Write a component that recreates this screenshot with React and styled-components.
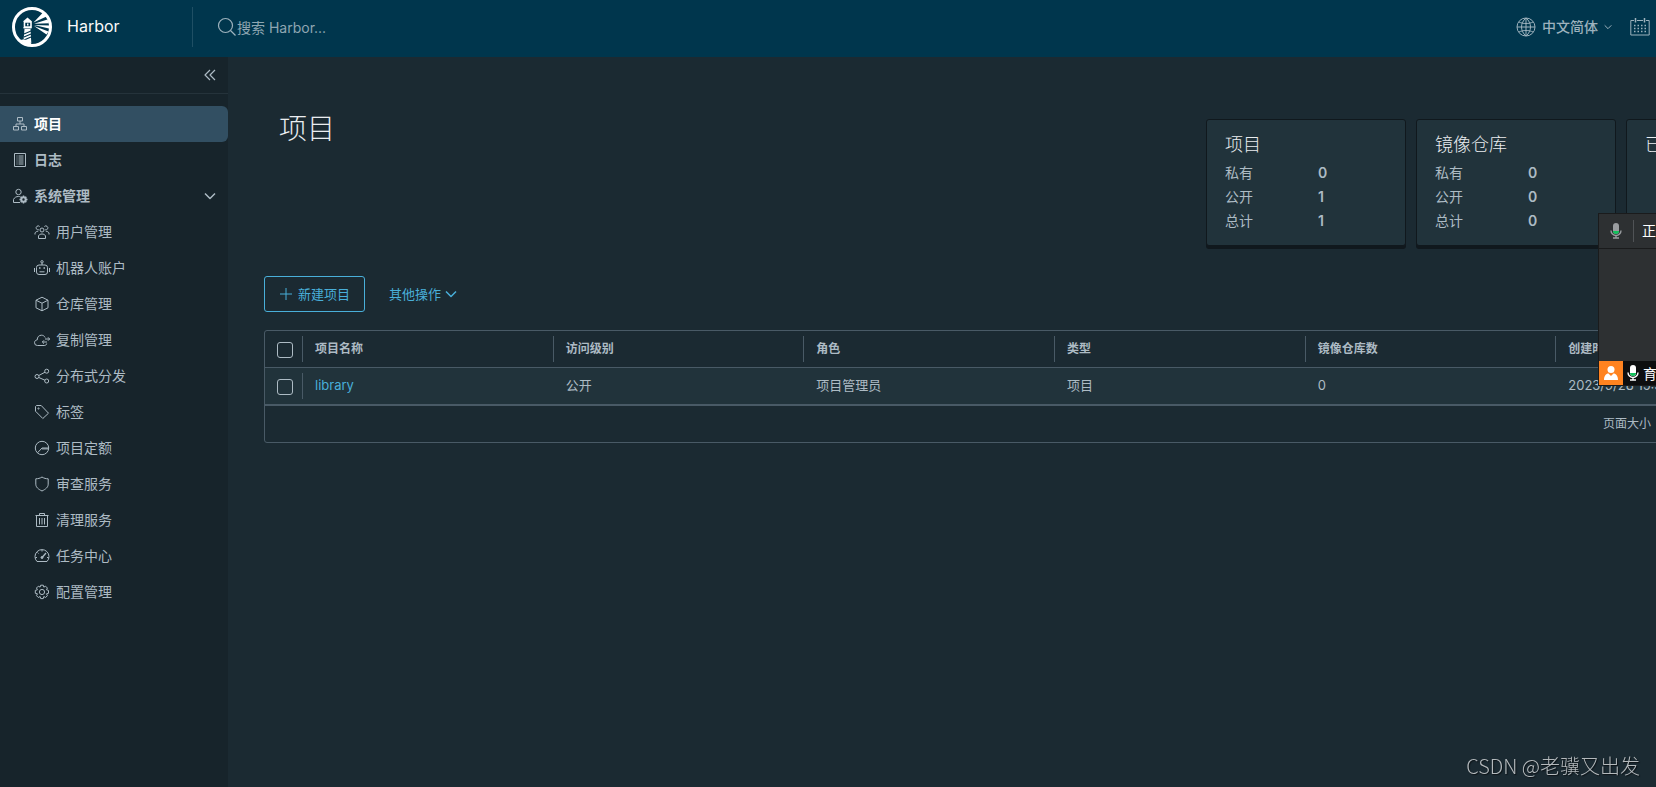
import React from 'react';
import styled, { createGlobalStyle } from 'styled-components';

const GlobalStyle = createGlobalStyle`
  * {
    box-sizing: border-box;
  }
  html, body {
    margin: 0;
    overflow: hidden;
    background: #1b2a32;
  }
  body, button, input {
    font-family: Inter, 'Noto Sans CJK SC', sans-serif;
  }
`;

const Svg = ({ size = 16, box = 16, stroke = 1, children }) => (
  <svg
    width={size}
    height={size}
    viewBox={`0 0 ${box} ${box}`}
    fill="none"
    stroke="currentColor"
    strokeWidth={stroke}
    strokeLinejoin="round"
    aria-hidden="true"
  >
    {children}
  </svg>
);

const icons = {
  projects: (
    <>
      <path d="M5.500 1.500h5v3.500h-5zM1.500 10.500h5v3.500h-5zM9.500 10.500h5v3.500h-5z" />
      <path d="M8 5v3M4 10.500V8h8v2.500" />
    </>
  ),
  logs: (
    <>
      <path d="M2.500 1.500h11v13h-11z" />
      <path d="M4.500 4h1M6.500 4h5M4.500 6h1M6.500 6h5M4.500 8h1M6.500 8h5M4.500 10h1M6.500 10h5M4.500 12h1M6.500 12h5" />
    </>
  ),
  admin: (
    <>
      <circle cx="6.500" cy="4" r="2.700" />
      <path d="M8 14.500H1.500v-3C2.500 9.300 4.300 8.500 6.500 8.500c.8 0 1.500.1 2 .4" />
      <circle cx="11.500" cy="11.500" r="2.200" strokeWidth="2" />
      <path
        d="M11.500 7.500v1.500M11.500 14v1.500M7.500 11.500H9M14 11.500h1.500M8.700 8.700l1 1M13.300 13.300l1 1M8.700 14.300l1-1M13.300 9.700l1-1"
        strokeWidth="1.500"
      />
    </>
  ),
  users: (
    <>
      <circle cx="8" cy="6" r="2" />
      <path d="M4.500 14.500v-2.700C5.300 10.500 6.500 10 8 10s2.700.5 3.500 1.800v2.700z" />
      <path d="M4.800 5.800A2 2 0 1 1 5.600 2.500M11.200 5.800a2 2 0 1 0-.8-3.300M1 10.500V9c.6-1.100 1.700-1.700 3.200-1.700M15 10.500V9c-.6-1.100-1.700-1.700-3.200-1.700" />
    </>
  ),
  robot: (
    <>
      <circle cx="8" cy="1.800" r="1.200" />
      <path d="M8 3v2M5 5h6a2.500 2.500 0 0 1 2.500 2.500V12a2.500 2.500 0 0 1-2.500 2.500H5A2.500 2.500 0 0 1 2.500 12V7.500A2.500 2.500 0 0 1 5 5zM.5 8v4M15.500 8v4M5.500 11.800h5" />
      <path d="M5 8h1.500M9.500 8H11" strokeWidth="1.500" />
    </>
  ),
  cube: (
    <>
      <path d="M8 1.200l6 3v7.600l-6 3-6-3V4.200z" />
      <path d="M2 4.200l6 3 6-3M8 7.200v7.600" />
    </>
  ),
  replication: (
    <>
      <path d="M12.700 11.500c-.2 1.300-1.100 2-2.500 2H3.500A2.900 2.900 0 0 1 .5 10.700c0-1.600 1.200-2.700 2.700-2.800C3.200 5 5 3.200 7.400 3.200c1.700 0 3 .8 3.700 2.300" />
      <path d="M11 7h4.500M14 5.300L15.700 7 14 8.700M13 10H8.500M10 8.300L8.300 10l1.700 1.700" />
    </>
  ),
  share: (
    <>
      <circle cx="3" cy="8.500" r="2" />
      <circle cx="12.700" cy="3.200" r="2" />
      <circle cx="12.700" cy="13" r="2" />
      <path d="M4.800 7.500L11 4.200M4.800 9.500l6.100 2.700" />
    </>
  ),
  tag: (
    <>
      <path d="M1.500 2.500v4.700l7.300 7.300 5.700-5.300-7.300-7.700H2.500z" />
      <circle cx="4.500" cy="4.500" r=".6" />
    </>
  ),
  quota: (
    <>
      <circle cx="8" cy="8" r="6.700" />
      <path d="M3.500 12.800L8 8h6.700M8 8.900h6.500" />
    </>
  ),
  shield: <path d="M8 1c2 1.300 4 1.800 6.200 1.800v5.400c0 3-2.500 5-6.200 6.800-3.700-1.800-6.200-3.800-6.200-6.800V2.800C4 2.800 6 2.300 8 1z" />,
  trash: (
    <path d="M1.500 3.500h13M2.500 3.500v11h11v-11M5.500 3V1.500h5V3M5.500 6v6.500M8 6v6.500M10.500 6v6.500" />
  ),
  gauge: (
    <>
      <path d="M3 13.500a7 7 0 1 1 10 0zM8 2v1.500M3.500 4.500l1 1M1.500 9.500H3M13 9.500h1.500" />
      <path d="M8.500 9l3.500-4" strokeWidth="1.300" />
      <circle cx="8" cy="9.500" r="1" fill="currentColor" />
    </>
  ),
  gear: (
    <>
      <circle cx="8" cy="8" r="2.600" />
      <path d="M6.700 1.200h2.600l.5 1.900 1.800-.9 1.800 1.800-.9 1.800 2 .6v2.900l-2 .5.900 1.900-1.800 1.800-1.800-1-.5 2.100H6.700l-.6-2.100-1.800 1-1.800-1.800.9-1.900-2.100-.5V6.400l2.100-.6-.9-1.800 1.800-1.800 1.800.9z" />
    </>
  ),
};

const systemItems = [
  ['users', '用户管理'],
  ['robot', '机器人账户'],
  ['cube', '仓库管理'],
  ['replication', '复制管理'],
  ['share', '分布式分发'],
  ['tag', '标签'],
  ['quota', '项目定额'],
  ['shield', '审查服务'],
  ['trash', '清理服务'],
  ['gauge', '任务中心'],
  ['gear', '配置管理'],
];

const summaries = [
  { title: '项目', rows: [['私有', 0], ['公开', 1], ['总计', 1]] },
  { title: '镜像仓库', rows: [['私有', 0], ['公开', 0], ['总计', 0]] },
  { title: '已使用容量', rows: [] },
];

const columns = ['项目名称', '访问级别', '角色', '类型', '镜像仓库数', '创建时间'];

const Logo = () => (
  <svg width="40" height="40" viewBox="0 0 40 40" aria-hidden="true">
    <circle cx="20" cy="20" r="18.500" fill="none" stroke="#fff" strokeWidth="3" />
    <path d="M15.500 10.500l4 3.500v1h-8v-1z" fill="#fff" />
    <path d="M12.500 15h6.500v5h-6.500z" fill="none" stroke="#fff" strokeWidth="1.600" />
    <path d="M15 16.500h1.500v2H15z" fill="#fff" />
    <path d="M11.500 20h8v1.500h-8z" fill="#fff" />
    <path d="M12.500 22h6l.8 14-7.800-2z" fill="#fff" />
    <path d="M12 27l7-3M12 30l7-3M12 33l7-3" stroke="#00364d" strokeWidth="1.200" />
    <path d="M21.500 15.500L31 5.500l3.500 4zM22 16.800L35.500 12.500l1.500 3.700zM22 18l15 .5v3zM22 19l14.500 5.500-2 3z" fill="#fff" />
    <path d="M8 33c4-1.500 9 0 12 4.500l-4 1z" fill="#fff" />
  </svg>
);

const Mic = ({ color }) => (
  <svg width="12" height="16" viewBox="0 0 12 16" aria-hidden="true">
    <rect x="3" y="0" width="6" height="11" rx="3" fill={color} />
    <path d="M3 8h6a3 3 0 0 1-6 0z" fill="#12c25b" />
    <path d="M1 7.500a5 5 0 0 0 10 0M6 12.500V15M3 15h6" fill="none" stroke={color} strokeWidth="1.400" />
  </svg>
);

const Chevron = ({ size = 12, stroke = 1.5 }) => (
  <Svg size={size} box={12} stroke={stroke}>
    <path d="M1 3.500l5 5 5-5" />
  </Svg>
);

const App = () => {
  return (
    <>
      <GlobalStyle />
      <Header>
        <Brand href="#home">
          <Logo />
          <Label>Harbor</Label>
        </Brand>
        <Search>
          <Svg size={20} box={20} stroke={1.2}>
            <circle cx="8.500" cy="8.500" r="7" />
            <path d="M13.500 13.500l5 5" />
          </Svg>
          <SearchInput type="text" placeholder="搜索 Harbor..." aria-label="搜索 Harbor" />
        </Search>
        <HeaderActions>
          <LanguageButton type="button">
            <Svg size={20} box={20}>
              <circle cx="10" cy="10" r="9" />
              <path d="M10 1v18M1 10h18M3 5c4 2 10 2 14 0M3 15c4-2 10-2 14 0M10 1C4 6 4 14 10 19M10 1c6 5 6 13 0 18" />
            </Svg>
            <Label>中文简体</Label>
            <Chevron size={8} />
          </LanguageButton>
          <EventButton type="button" aria-label="事件日志">
            <Svg size={20} box={20}>
              <path d="M4 3.500H.8v14.500h18.400V3.500H16M7 3.500h6" />
              <path d="M5.500 1v4.500M14.500 1v4.500" strokeWidth="1.500" />
              <path d="M4 8.500h12M4 11.500h12M4 14.500h12" strokeWidth="1.500" strokeDasharray="1.500 2" />
            </Svg>
          </EventButton>
        </HeaderActions>
      </Header>
      <Body>
        <Sidebar>
          <CollapseRow>
            <CollapseButton type="button" aria-label="收起">
              <Svg size={12} box={12} stroke={1.2}>
                <path d="M6 1L1 6l5 5M11 1L6 6l5 5" />
              </Svg>
            </CollapseButton>
          </CollapseRow>
          <NavList>
            <NavLink href="#projects" $active $bold>
              <Svg>{icons.projects}</Svg>
              <Label>项目</Label>
            </NavLink>
            <NavLink href="#logs" $bold>
              <Svg>{icons.logs}</Svg>
              <Label>日志</Label>
            </NavLink>
            <NavGroup type="button" aria-expanded="true">
              <Svg>{icons.admin}</Svg>
              <GroupName>系统管理</GroupName>
              <Chevron />
            </NavGroup>
            {systemItems.map(([icon, label]) => (
              <NavLink key={icon} href={`#${icon}`} $child>
                <Svg>{icons[icon]}</Svg>
                <Label>{label}</Label>
              </NavLink>
            ))}
          </NavList>
        </Sidebar>
        <Main>
          <Content>
            <Top>
              <Title>项目</Title>
              <Cards>
                {summaries.map(({ title, rows }) => (
                  <Card key={title}>
                    <CardTitle>{title}</CardTitle>
                    <Stats>
                      {rows.map(([name, count]) => (
                        <Stat key={name}>
                          <dt>{name}</dt>
                          <Count>{count}</Count>
                        </Stat>
                      ))}
                    </Stats>
                  </Card>
                ))}
              </Cards>
            </Top>
            <Toolbar>
              <NewButton type="button">
                <Svg size={14} box={14}>
                  <path d="M7 1v12M1 7h12" />
                </Svg>
                <Label>新建项目</Label>
              </NewButton>
              <ActionButton type="button">
                <Label>其他操作</Label>
                <Chevron />
              </ActionButton>
            </Toolbar>
            <Grid>
              <Table>
                <thead>
                  <HeadRow>
                    <CheckCell as="th">
                      <Checkbox type="checkbox" aria-label="全选" />
                    </CheckCell>
                    {columns.map((name) => (
                      <HeadCell key={name}>{name}</HeadCell>
                    ))}
                  </HeadRow>
                </thead>
                <tbody>
                  <Row>
                    <CheckCell>
                      <Checkbox type="checkbox" aria-label="library" />
                    </CheckCell>
                    <Cell><ProjectLink href="#library">library</ProjectLink></Cell>
                    <Cell>公开</Cell>
                    <Cell>项目管理员</Cell>
                    <Cell>项目</Cell>
                    <Cell>0</Cell>
                    <Cell>2023/9/28 15:32</Cell>
                  </Row>
                </tbody>
              </Table>
              <GridFooter>
                <Label>页面大小</Label>
              </GridFooter>
            </Grid>
          </Content>
        </Main>
      </Body>
      <Meeting>
        <MeetingBar>
          <Mic color="#9a9da0" />
          <MeetingText>正在讲话</MeetingText>
        </MeetingBar>
        <MeetingSpeaker>
          <Avatar>
            <svg width="16" height="16" viewBox="0 0 16 16" fill="#fff" aria-hidden="true">
              <circle cx="8" cy="4.500" r="3.500" />
              <path d="M1 15c0-4 2-6.500 4.500-6.500L8 11l2.500-2.500C13 8.500 15 11 15 15z" />
            </svg>
          </Avatar>
          <Mic color="#fff" />
          <span>育</span>
        </MeetingSpeaker>
      </Meeting>
      <Watermark>CSDN @老骥又出发</Watermark>
    </>
  )
}

export default App;

const Label = styled.span`
  padding-bottom: 2px;
  white-space: nowrap;
`;

const Header = styled.header`
  display: flex;
  align-items: center;
  height: 57px;
  padding-bottom: 3px;
  background: #00364d;
  color: #9db2bd;
`;

const Brand = styled.a`
  display: flex;
  align-items: center;
  gap: 15px;
  width: 193px;
  height: 40px;
  padding-left: 12px;
  border-right: 1px solid #1f4f64;
  color: #fafafa;
  font-size: 16px;
  text-decoration: none;
`;

const Search = styled.label`
  display: flex;
  align-items: center;
  flex: 1;
  padding-left: 24px;
`;

const SearchInput = styled.input`
  flex: 1;
  padding: 0;
  border: none;
  outline: none;
  background: transparent;
  color: #fafafa;
  font-size: 14px;
  &::placeholder {
    color: #8fa6b2;
    opacity: 1;
  }
`;

const HeaderActions = styled.div`
  display: flex;
  align-items: center;
  gap: 18px;
  padding-right: 6px;
`;

const PlainButton = styled.button`
  display: flex;
  align-items: center;
  padding: 0;
  border: none;
  background: none;
  color: inherit;
  cursor: pointer;
`;

const LanguageButton = styled(PlainButton)`
  gap: 6px;
  font-size: 14px;
  font-weight: 500;
`;

const EventButton = styled(PlainButton)``;

const Body = styled.div`
  display: flex;
  height: calc(100vh - 57px);
`;

const Sidebar = styled.aside`
  flex: none;
  width: 228px;
  background: #17242b;
`;

const CollapseRow = styled.div`
  display: flex;
  align-items: center;
  justify-content: flex-end;
  height: 37px;
  padding-right: 12px;
  border-bottom: 1px solid #25333b;
`;

const CollapseButton = styled(PlainButton)`
  color: #adbbc4;
`;

const NavList = styled.nav`
  display: flex;
  flex-direction: column;
  padding-top: 12px;
`;

const NavLink = styled.a`
  display: flex;
  align-items: center;
  gap: 6px;
  height: 36px;
  padding-left: ${(props) => (props.$child ? '34px' : '12px')};
  border-radius: 0 6px 6px 0;
  background: ${(props) => (props.$active ? '#324f62' : 'transparent')};
  color: ${(props) => (props.$active ? '#fff' : '#adbbc4')};
  font-size: 14px;
  font-weight: ${(props) => (props.$bold ? 700 : 400)};
  text-decoration: none;
  svg {
    color: #adbbc4;
  }
`;

const NavGroup = styled(PlainButton)`
  gap: 6px;
  height: 36px;
  padding: 0 12px;
  color: #adbbc4;
  font-size: 14px;
  font-weight: 700;
  text-align: left;
`;

const GroupName = styled(Label)`
  flex: 1;
`;

const Main = styled.main`
  flex: 1;
  min-width: 0;
  padding: 62px 36px 0;
  overflow: hidden;
  background: #1b2a32;
  color: #adbbc4;
`;

const Content = styled.div`
  min-width: 1562px;
`;

const Top = styled.div`
  display: flex;
  align-items: flex-start;
  justify-content: space-between;
`;

const Title = styled.h1`
  margin: 0;
  padding: 0 15px;
  color: #eaedf0;
  font-size: 28px;
  font-weight: 300;
  line-height: 20px;
`;

const Cards = styled.div`
  display: flex;
  gap: 10px;
`;

const Card = styled.section`
  width: 200px;
  height: 127px;
  padding: 12px 18px;
  border: 1px solid #10181d;
  border-radius: 3px;
  background: #21333b;
  box-shadow: 0 3px 0 0 #10181d;
`;

const CardTitle = styled.h2`
  margin: 0;
  color: #eaedf0;
  font-size: 18px;
  font-weight: 300;
  line-height: 25px;
`;

const Stats = styled.dl`
  margin: 4px 0 0;
  font-size: 14px;
  line-height: 24px;
`;

const Stat = styled.div`
  display: grid;
  grid-template-columns: 93px 1fr;
`;

const Count = styled.dd`
  margin: 0;
  font-weight: 600;
`;

const Toolbar = styled.div`
  display: flex;
  gap: 24px;
  margin: 30px 0 18px;
`;

const NewButton = styled(PlainButton)`
  gap: 5px;
  height: 36px;
  padding: 0 14px;
  border: 1px solid #49afd9;
  border-radius: 3px;
  color: #49afd9;
  font-size: 13px;
`;

const ActionButton = styled(PlainButton)`
  gap: 4px;
  color: #49afd9;
  font-size: 13px;
`;

const Grid = styled.div`
  margin-right: 18px;
  border: 1px solid #495a66;
  border-radius: 3px;
`;

const Table = styled.table`
  width: 100%;
  border-collapse: collapse;
  table-layout: fixed;
  text-align: left;
`;

const HeadRow = styled.tr`
  height: 36px;
  border-bottom: 1px solid #495a66;
`;

const Row = styled.tr`
  height: 38px;
  border-bottom: 2px solid #495a66;
  background: #21333b;
`;

const divider = '#495a66';

const CheckCell = styled.td`
  width: 38px;
  padding: 2px 0 0 12px;
  background: linear-gradient(${divider}, ${divider}) right center / 1px 26px no-repeat;
`;

const Checkbox = styled.input`
  display: block;
  width: 16px;
  height: 16px;
  margin: 0;
  appearance: none;
  border: 1px solid #adbbc4;
  border-radius: 3px;
`;

const HeadCell = styled.th`
  padding: 0 12px 2px;
  background: linear-gradient(${divider}, ${divider}) right center / 1px 26px no-repeat;
  font-size: 12px;
  font-weight: 700;
`;

const Cell = styled.td`
  padding: 0 12px 2px;
  font-size: 13px;
  white-space: nowrap;
`;

const ProjectLink = styled.a`
  color: #49afd9;
  text-decoration: none;
`;

const GridFooter = styled.div`
  display: flex;
  align-items: center;
  justify-content: flex-end;
  height: 36px;
  padding: 0 156px 2px 0;
  font-size: 12px;
`;

const Meeting = styled.aside`
  position: fixed;
  top: 213px;
  right: 0;
  display: flex;
  flex-direction: column;
  width: 58px;
  height: 173px;
  overflow: hidden;
  border: 1px solid #1a1b1c;
  border-right: none;
  background: #2d3032;
  color: #fff;
  font-size: 14px;
  white-space: nowrap;
`;

const MeetingBar = styled.div`
  display: flex;
  align-items: center;
  gap: 11px;
  height: 35px;
  padding-left: 11px;
  border-bottom: 1px solid #1a1b1c;
  svg {
    flex: none;
  }
`;

const MeetingText = styled(Label)`
  padding-left: 8px;
  border-left: 1px solid #505356;
`;

const MeetingSpeaker = styled.div`
  display: flex;
  align-items: center;
  gap: 4px;
  height: 24px;
  margin-top: auto;
  background: #0d0e0f;
  svg {
    flex: none;
  }
`;

const Avatar = styled.span`
  display: flex;
  align-items: center;
  justify-content: center;
  flex: none;
  width: 24px;
  height: 24px;
  background: #ff8320;
`;

const Watermark = styled.div`
  position: fixed;
  right: 16px;
  bottom: 7px;
  color: #b4b9bc;
  font-family: 'Noto Sans CJK SC', sans-serif;
  font-size: 20px;
  font-weight: 300;
  text-shadow: 1px 1px 1px #0c1216;
`;
